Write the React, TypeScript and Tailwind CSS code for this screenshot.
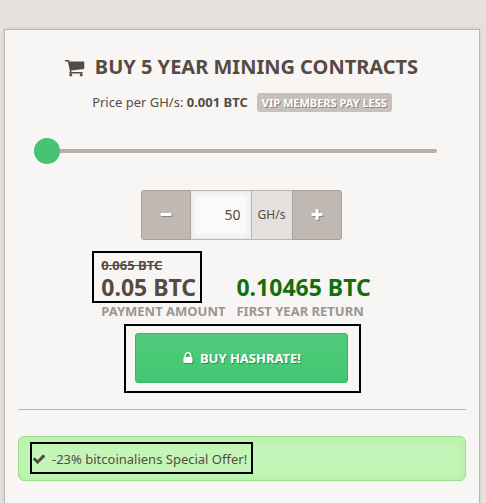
import { useState } from 'react'
import type { ReactNode } from 'react'

const ICONS = {
  cart: 'M704 1536q0 52-38 90t-90 38-90-38-38-90 38-90 90-38 90 38 38 90zm896 0q0 52-38 90t-90 38-90-38-38-90 38-90 90-38 90 38 38 90zm128-1088v512q0 24-16.5 42.5t-40.5 21.5l-1044 122q13 60 13 70 0 16-24 64h920q26 0 45 19t19 45-19 45-45 19h-1024q-26 0-45-19t-19-45q0-11 8-31.5t16-36 21.5-40 15.5-29.5l-177-823h-204q-26 0-45-19t-19-45 19-45 45-19h256q16 0 28.5 6.5t19.5 15.5 13 24.5 8 26 5.5 29.5 4.5 26h1201q26 0 45 19t19 45z',
  lock: 'M640 768h512v-192q0-106-75-181t-181-75-181 75-75 181v192zm832 96v576q0 40-28 68t-68 28h-960q-40 0-68-28t-28-68v-576q0-40 28-68t68-28h32v-192q0-184 132-316t316-132 316 132 132 316v192h32q40 0 68 28t28 68z',
  check: 'M1671 566q0 40-28 68l-724 724-136 136q-28 28-68 28t-68-28l-136-136-362-362q-28-28-28-68t28-68l136-136q28-28 68-28t68 28l294 295 656-657q28-28 68-28t68 28l136 136q28 28 28 68z',
  plus: 'M1600 736v192q0 40-28 68t-68 28h-416v416q0 40-28 68t-68 28h-192q-40 0-68-28t-28-68v-416h-416q-40 0-68-28t-28-68v-192q0-40 28-68t68-28h416v-416q0-40 28-68t68-28h192q40 0 68 28t28 68v416h416q40 0 68 28t28 68z',
  minus: 'M1600 736v192q0 40-28 68t-68 28h-1216q-40 0-68-28t-28-68v-192q0-40 28-68t68-28h1216q40 0 68 28t28 68z',
}

function Icon({ name, className }: { name: keyof typeof ICONS; className: string }) {
  return (
    <svg viewBox="0 0 1792 1792" fill="currentColor" aria-hidden className={className}>
      <path d={ICONS[name]} />
    </svg>
  )
}

/** Black outline laid over whatever it wraps. */
function Marked({ frame, children }: { frame: string; children: ReactNode }) {
  return (
    <div className="relative">
      {children}
      <div className={`pointer-events-none absolute border-2 border-black ${frame}`} />
    </div>
  )
}

function StepButton({
  icon,
  label,
  rounded,
  onClick,
}: {
  icon: 'plus' | 'minus'
  label: string
  rounded: string
  onClick: () => void
}) {
  return (
    <button
      type="button"
      aria-label={label}
      onClick={onClick}
      className={`flex w-[50px] items-center justify-center border border-[#a9a09a] bg-[#c0b8b2] text-white ${rounded}`}
    >
      <Icon name={icon} className="size-[14px] drop-shadow-[1px_1px_0_#8d857f]" />
    </button>
  )
}

export default function App() {
  const [amount, setAmount] = useState(50)
  const step = (by: number) => setAmount((a) => Math.max(50, a + by))

  return (
    <div className="flex min-h-screen flex-col bg-[#e5e1de] pt-[29px] pr-[6px] pl-1 font-['Noto_Sans','Open_Sans',sans-serif] text-[13px] leading-5 text-[#564b43]">
      <main className="flex flex-1 flex-col border border-b-0 border-[#bcb5ae] bg-[#f7f6f5] px-[13px] shadow-[0_0_4px_#cfcac6]">
        <h1 className="mt-[23px] mr-[2px] flex items-center justify-center gap-[10px] text-[20px] leading-7 font-bold">
          <Icon name="cart" className="size-[21px]" />
          BUY 5 YEAR MINING CONTRACTS
        </h1>

        <div className="mt-[11px] flex items-center justify-center gap-[9px]">
          <p>
            Price per GH/s: <strong>0.001 BTC</strong>
          </p>
          <span className="rounded-[3px] bg-[#c7c0bb] px-[5px] text-[11px] leading-[19px] font-bold text-white [text-shadow:1px_1px_0_#8d857f]">
            VIP MEMBERS PAY LESS
          </span>
        </div>

        <input
          type="range"
          aria-label="Hashrate"
          min={50}
          max={5000}
          value={amount}
          onChange={(e) => setAmount(Number(e.target.value))}
          className="mt-[26px] mr-[29px] ml-4 h-[26px] appearance-none bg-transparent [&::-webkit-slider-runnable-track]:h-1 [&::-webkit-slider-runnable-track]:rounded-sm [&::-webkit-slider-runnable-track]:bg-[#b7afa8] [&::-webkit-slider-thumb]:-mt-[11px] [&::-webkit-slider-thumb]:size-[26px] [&::-webkit-slider-thumb]:appearance-none [&::-webkit-slider-thumb]:rounded-full [&::-webkit-slider-thumb]:bg-[#46c373]"
        />

        <div className="mt-[26px] mr-[2px] flex h-[50px] justify-center">
          <StepButton icon="minus" label="Less" rounded="rounded-l-[3px]" onClick={() => step(-1)} />
          <input
            type="text"
            inputMode="numeric"
            aria-label="Amount in GH/s"
            value={amount}
            onChange={(e) => setAmount(Number(e.target.value) || 0)}
            className="w-[60px] border-y border-[#bcb5ae] bg-[#fbfafa] pr-[10px] text-right text-[14px] shadow-[inset_0_0_4px_3px_#eeecea]"
          />
          <span className="flex w-[41px] items-center justify-center border border-r-0 border-[#bcb5ae] bg-[#e4e0dd] text-[12px]">
            GH/s
          </span>
          <StepButton icon="plus" label="More" rounded="rounded-r-[3px]" onClick={() => step(1)} />
        </div>

        <dl className="mt-[17px] mr-3 flex items-end justify-center gap-[11px] font-bold">
          <div className="flex flex-col-reverse">
            <dt className="leading-5 text-[#9d958e]">PAYMENT AMOUNT</dt>
            <dd className="w-fit">
              <Marked frame="-top-[6px] -right-[6px] -left-[9px] h-[52px]">
                <del className="block leading-4">0.065 BTC</del>
                <span className="block text-[23px] leading-7">0.05 BTC</span>
              </Marked>
            </dd>
          </div>
          <div className="flex flex-col-reverse">
            <dt className="leading-5 text-[#9d958e]">FIRST YEAR RETURN</dt>
            <dd className="text-[23px] leading-7 text-[#146e0c]">0.10465 BTC</dd>
          </div>
        </dl>

        <div className="mt-3 mr-[2px] flex justify-center">
          <Marked frame="-top-[9px] -right-[13px] -bottom-[10px] -left-[11px]">
            <button
              type="button"
              className="flex h-[50px] w-[213px] items-center justify-center gap-[5px] rounded-[3px] border border-[#3bb368] bg-linear-to-b from-[#4fcb7b] to-[#43c772] font-bold text-white [text-shadow:1px_1px_0_#2f8f52]"
            >
              <Icon name="lock" className="size-[14px] drop-shadow-[1px_1px_0_#2f8f52]" />
              BUY HASHRATE!
            </button>
          </Marked>
        </div>

        <hr className="mt-[26px] border-[#bcb5ae]" />

        <div className="mt-[26px] flex h-[45px] items-center rounded-md border border-[#9bdc8e] bg-[#c5f6b9] pl-[13px] shadow-[inset_0_0_12px_4px_#b5f2a8]">
          <Marked frame="-top-[7px] -right-[6px] -left-[2px] h-8">
            <p className="flex items-center gap-[6px]">
              <Icon name="check" className="size-[14px]" />
              -23% bitcoinaliens Special Offer!
            </p>
          </Marked>
        </div>
      </main>
    </div>
  )
}
